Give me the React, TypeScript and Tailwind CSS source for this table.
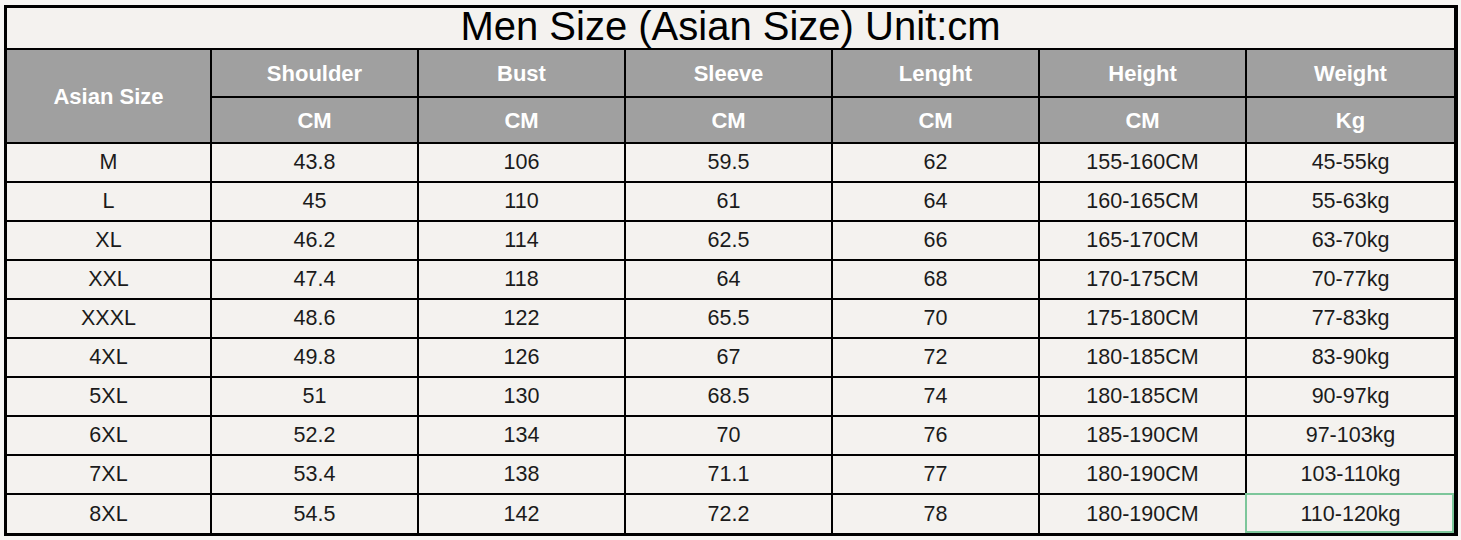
import React from 'react';

const columns = [
  { name: 'Shoulder', unit: 'CM' },
  { name: 'Bust', unit: 'CM' },
  { name: 'Sleeve', unit: 'CM' },
  { name: 'Lenght', unit: 'CM' },
  { name: 'Height', unit: 'CM' },
  { name: 'Weight', unit: 'Kg' },
];

const rows = [
  ['M', '43.8', '106', '59.5', '62', '155-160CM', '45-55kg'],
  ['L', '45', '110', '61', '64', '160-165CM', '55-63kg'],
  ['XL', '46.2', '114', '62.5', '66', '165-170CM', '63-70kg'],
  ['XXL', '47.4', '118', '64', '68', '170-175CM', '70-77kg'],
  ['XXXL', '48.6', '122', '65.5', '70', '175-180CM', '77-83kg'],
  ['4XL', '49.8', '126', '67', '72', '180-185CM', '83-90kg'],
  ['5XL', '51', '130', '68.5', '74', '180-185CM', '90-97kg'],
  ['6XL', '52.2', '134', '70', '76', '185-190CM', '97-103kg'],
  ['7XL', '53.4', '138', '71.1', '77', '180-190CM', '103-110kg'],
  ['8XL', '54.5', '142', '72.2', '78', '180-190CM', '110-120kg'],
];

export default function App() {
  return (
    <div className="w-[1461px] h-[540px] bg-[#f7f6f4] pt-[5px] pl-[4px] font-['Liberation_Sans',Arial,sans-serif]">
      <div className="w-[1454px] border-[3px] border-r-[4px] border-black">
        <div className="grid grid-cols-[203px_repeat(5,205px)_207px] grid-rows-[40px_46px_44px_repeat(9,37px)_38px] gap-[2px] bg-black">
          {/* Title */}
          <div className="col-span-7 bg-[#f4f2ef] flex justify-center text-[40px] leading-[36px] text-black">
            Men Size (Asian Size) Unit:cm
          </div>

          {/* Header */}
          <div className="row-span-2 bg-[#a0a0a0] flex items-center justify-center text-white font-bold text-[22px]">
            Asian Size
          </div>
          {columns.map((c) => (
            <div key={c.name} className="bg-[#a0a0a0] flex items-center justify-center text-white font-bold text-[22px]">
              {c.name}
            </div>
          ))}
          {columns.map((c) => (
            <div key={c.name + '-unit'} className="bg-[#a0a0a0] flex items-center justify-center text-white font-bold text-[22px]">
              {c.unit}
            </div>
          ))}

          {/* Data */}
          {rows.map((r, ri) =>
            r.map((v, ci) => (
              <div
                key={ri + '-' + ci}
                className="relative bg-[#f4f2ef] flex items-center justify-center text-[#1b1b1b] text-[21.5px]"
              >
                {v}
                {ri === rows.length - 1 && ci === r.length - 1 && (
                  <div className="absolute -left-[2px] -top-[2px] right-0 bottom-0 border-2 border-[#7cc69a]" />
                )}
              </div>
            ))
          )}
        </div>
      </div>
    </div>
  );
}
